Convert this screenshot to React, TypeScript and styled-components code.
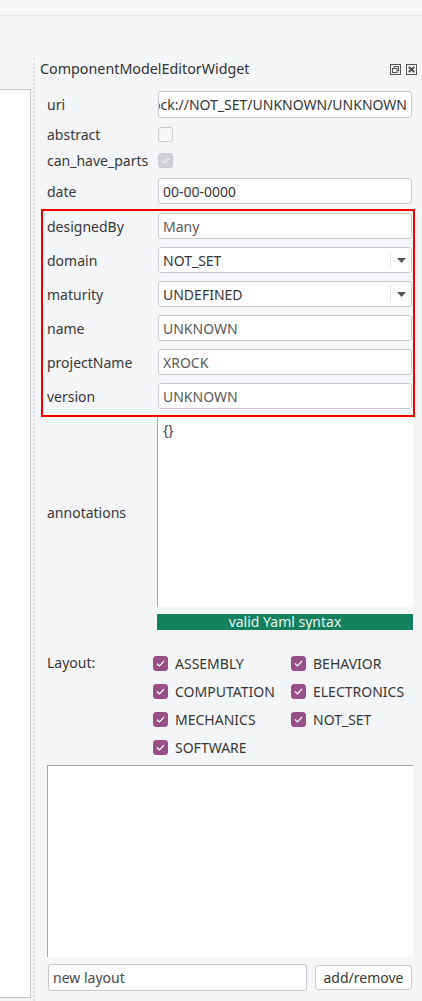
import React from "react";
import styled, { createGlobalStyle } from "styled-components";

const Global = createGlobalStyle`
  html, body { margin: 0; padding: 0; background: #f4f5f7; }
  body { font-family: "Noto Sans", "DejaVu Sans", sans-serif; font-size: 14px; color: #3c3c3c; }
  * { box-sizing: border-box; }
`;

const Page = styled.div`
  width: 422px;
  height: 1001px;
  display: flex;
  flex-direction: column;
  overflow: hidden;
  background: #f4f5f7;
`;

const TopBar = styled.div`
  height: 16px;
  flex: none;
  background: #f6f6f7;
  border-bottom: 1px solid #e4e5e8;
`;

const Main = styled.div`
  flex: 1;
  display: flex;
  min-height: 0;
`;

const LeftPanel = styled.div`
  width: 31px;
  flex: none;
  margin-top: 73px;
  margin-bottom: 3px;
  background: #ffffff;
  border-top: 1px solid #c4c6cb;
  border-right: 1px solid #c4c6cb;
  border-bottom: 1px solid #c4c6cb;
`;

const Splitter = styled.div`
  width: 5px;
  flex: none;
  display: flex;
  justify-content: center;
  padding-top: 42px;
  &::after {
    content: "";
    display: block;
    width: 0;
    height: 100%;
    border-left: 2px dotted #dfe1e5;
  }
`;

const Dock = styled.div`
  flex: 1;
  display: flex;
  flex-direction: column;
  padding-left: 4px;
`;

const DockTitle = styled.div`
  height: 32px;
  margin-top: 44px;
  display: flex;
  align-items: flex-start;
  justify-content: space-between;
  padding-right: 5px;
`;

const TitleText = styled.span`
  font-size: 14.3px;
  color: #333333;
  line-height: 18px;
`;

const TitleButtons = styled.div`
  display: flex;
  gap: 5px;
  padding-top: 4px;
`;

const Form = styled.div`
  width: 374px;
  margin-left: 1px;
  margin-top: -1px;
  display: flex;
  flex-direction: column;
`;

const Row = styled.div<{ $h: number; $mt?: number }>`
  height: ${(p) => p.$h}px;
  margin-top: ${(p) => p.$mt ?? 0}px;
  padding-left: 6px;
  padding-right: 3px;
  display: grid;
  grid-template-columns: 111px 1fr;
  align-items: center;
`;

const Label = styled.span`
  color: #383838;
  font-size: 14px;
  white-space: nowrap;
`;

const LineEdit = styled.div<{ $dim?: boolean; $end?: boolean }>`
  height: 100%;
  background: #ffffff;
  border: 1px solid #c6c9cf;
  border-radius: 3px;
  display: flex;
  align-items: center;
  justify-content: ${(p) => (p.$end ? "flex-end" : "flex-start")};
  padding: 0 4px;
  overflow: hidden;
  white-space: nowrap;
  color: ${(p) => (p.$dim ? "#5b5b5b" : "#363636")};
  font-size: 14px;
`;

const Combo = styled(LineEdit)`
  justify-content: space-between;
  padding-right: 0;
`;

const ComboArrowBox = styled.div`
  width: 21px;
  height: 16px;
  border-left: 1px solid #e2e3e6;
  display: flex;
  align-items: center;
  justify-content: center;
`;

const CheckBox = styled.div<{ $on?: boolean; $disabled?: boolean }>`
  width: 15px;
  height: 15px;
  flex: none;
  border-radius: 3px;
  display: flex;
  align-items: center;
  justify-content: center;
  background: ${(p) => (p.$disabled ? "#d0d1d4" : p.$on ? "#974f86" : "#f7f7f8")};
  border: 1px solid ${(p) => (p.$disabled ? "#c9cacd" : p.$on ? "#974f86" : "#c9cbcf")};
`;

const Highlight = styled.div`
  margin-top: 5px;
  border: 2px solid #f00000;
  padding: 2px 1px 6px 4px;
  display: flex;
  flex-direction: column;
  gap: 8px;
`;

const HRow = styled(Row)`
  padding-left: 0;
  padding-right: 0;
`;

const AnnotRow = styled.div`
  height: 190px;
  padding-left: 6px;
  padding-right: 2px;
  display: grid;
  grid-template-columns: 110px 1fr;
  align-items: center;
`;

const TextArea = styled.div`
  height: 100%;
  background: #ffffff;
  border-left: 1px solid #a3a5aa;
  padding: 4px 5px;
  color: #3a4a5a;
  font-size: 14px;
  line-height: 18px;
  align-self: stretch;
`;

const YamlStatus = styled.div`
  margin-top: 7px;
  margin-left: 116px;
  margin-right: 2px;
  height: 16px;
  background: #15805e;
  color: #e6f4ee;
  font-size: 14px;
  line-height: 16px;
  text-align: center;
`;

const LayoutSection = styled.div`
  margin-top: 19px;
  padding-left: 6px;
  display: grid;
  grid-template-columns: 106px 1fr;
`;

const LayoutLabel = styled(Label)`
  line-height: 28px;
`;

const CheckGrid = styled.div`
  display: grid;
  grid-template-columns: 138px 1fr;
  grid-auto-rows: 28px;
`;

const CheckItem = styled.div`
  display: flex;
  align-items: center;
  gap: 7px;
  color: #383838;
  font-size: 14px;
  white-space: nowrap;
`;

const ListBox = styled.div`
  margin-top: 4px;
  margin-left: 6px;
  margin-right: 2px;
  height: 192px;
  background: #ffffff;
  border-top: 1px solid #a3a5aa;
  border-left: 1px solid #a3a5aa;
`;

const BottomRow = styled.div`
  margin-top: 7px;
  margin-left: 7px;
  margin-right: 3px;
  height: 27px;
  display: flex;
  align-items: center;
  gap: 8px;
`;

const BottomInput = styled(LineEdit)`
  flex: none;
  width: 259px;
  height: 27px;
  color: #4a4a4a;
`;

const Button = styled.div`
  flex: 1;
  height: 25px;
  background: #ffffff;
  border: 1px solid #c6c9cf;
  border-radius: 3px;
  display: flex;
  align-items: center;
  justify-content: center;
  color: #383838;
  font-size: 14px;
`;

const Check = ({ color }: { color: string }) => (
  <svg width="9" height="7" viewBox="0 0 9 7">
    <polyline points="1,3.5 3.5,6 8,1" fill="none" stroke={color} strokeWidth="1.2" />
  </svg>
);

const Arrow = () => (
  <svg width="9" height="5" viewBox="0 0 9 5">
    <polygon points="0,0 9,0 4.5,5" fill="#555" />
  </svg>
);

const FloatIcon = () => (
  <svg width="11" height="11" viewBox="0 0 11 11">
    <rect x="0.5" y="0.5" width="10" height="10" fill="none" stroke="#555" />
    <rect x="4" y="2.5" width="4.5" height="4" fill="none" stroke="#555" />
    <rect x="2.5" y="4.5" width="4.5" height="4" fill="#f4f5f7" stroke="#555" />
  </svg>
);

const CloseIcon = () => (
  <svg width="11" height="11" viewBox="0 0 11 11">
    <rect x="0.5" y="0.5" width="10" height="10" fill="none" stroke="#555" />
    <path d="M2.8 2.8 L8.2 8.2 M8.2 2.8 L2.8 8.2" stroke="#444" strokeWidth="1.8" />
  </svg>
);

const layouts = [
  "ASSEMBLY",
  "BEHAVIOR",
  "COMPUTATION",
  "ELECTRONICS",
  "MECHANICS",
  "NOT_SET",
  "SOFTWARE",
];

const highlighted: { label: string; value: string; combo?: boolean; dim?: boolean }[] = [
  { label: "designedBy", value: "Many", dim: true },
  { label: "domain", value: "NOT_SET", combo: true },
  { label: "maturity", value: "UNDEFINED", combo: true },
  { label: "name", value: "UNKNOWN", dim: true },
  { label: "projectName", value: "XROCK", dim: true },
  { label: "version", value: "UNKNOWN", dim: true },
];

export default function App() {
  return (
    <Page>
      <Global />
      <TopBar />
      <Main>
        <LeftPanel />
        <Splitter />
        <Dock>
          <DockTitle>
            <TitleText>ComponentModelEditorWidget</TitleText>
            <TitleButtons>
              <FloatIcon />
              <CloseIcon />
            </TitleButtons>
          </DockTitle>
          <Form>
            <Row $h={27}>
              <Label>uri</Label>
              <LineEdit $end>xrock://NOT_SET/UNKNOWN/UNKNOWN</LineEdit>
            </Row>
            <Row $h={26} $mt={3}>
              <Label>abstract</Label>
              <CheckBox />
            </Row>
            <Row $h={27}>
              <Label>can_have_parts</Label>
              <CheckBox $disabled>
                <Check color="#eeeeee" />
              </CheckBox>
            </Row>
            <Row $h={26} $mt={4}>
              <Label>date</Label>
              <LineEdit>00-00-0000</LineEdit>
            </Row>
            <Highlight>
              {highlighted.map((f) => (
                <HRow key={f.label} $h={26}>
                  <Label>{f.label}</Label>
                  {f.combo ? (
                    <Combo>
                      <span>{f.value}</span>
                      <ComboArrowBox>
                        <Arrow />
                      </ComboArrowBox>
                    </Combo>
                  ) : (
                    <LineEdit $dim={f.dim}>{f.value}</LineEdit>
                  )}
                </HRow>
              ))}
            </Highlight>
            <AnnotRow>
              <Label>annotations</Label>
              <TextArea>{"{}"}</TextArea>
            </AnnotRow>
            <YamlStatus>valid Yaml syntax</YamlStatus>
            <LayoutSection>
              <LayoutLabel>Layout:</LayoutLabel>
              <CheckGrid>
                {layouts.map((l) => (
                  <CheckItem key={l}>
                    <CheckBox $on>
                      <Check color="#ffffff" />
                    </CheckBox>
                    {l}
                  </CheckItem>
                ))}
              </CheckGrid>
            </LayoutSection>
            <ListBox />
            <BottomRow>
              <BottomInput>new layout</BottomInput>
              <Button>add/remove</Button>
            </BottomRow>
          </Form>
        </Dock>
      </Main>
    </Page>
  );
}
